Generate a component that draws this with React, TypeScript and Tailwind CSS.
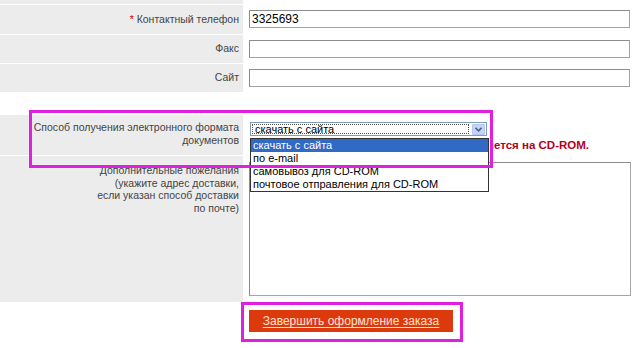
import React from 'react';

// ===== ORDER FORM (tail of the page) =====
const font = { fontFamily: '"Liberation Sans", Arial, sans-serif' };

const options = ['скачать с сайта', 'по e-mail', 'самовывоз для CD-ROM', 'почтовое отправления для CD-ROM'];

const TextRow: React.FC<{ label: React.ReactNode; value?: string; h: string }> = ({ label, value, h }) => (
  <>
    <div className={`bg-[#ececec] ${h} flex items-center justify-end pr-1 text-[10.5px] text-[#444]`}>{label}</div>
    <div className={`${h} pl-[6px] pt-[5px]`}>
      <div className="h-[18px] w-[381px] border border-[#a2a2a2] border-t-[#8c8c8c] border-l-[#8c8c8c] bg-white px-[2px] text-[12px] leading-[16px] text-black">
        {value}
      </div>
    </div>
  </>
);

const App: React.FC = () => {
  return (
    <div className="relative w-[640px] h-[348px] overflow-hidden bg-white" style={font}>
      <div className="grid grid-cols-[243px_397px] gap-y-px">
        <div className="bg-[#ececec] h-[4px]"></div>
        <div className="h-[4px]"></div>

        <TextRow
          h="h-[29px]"
          value="3325693"
          label={
            <span>
              <span className="text-[#d00000]">*</span> Контактный телефон
            </span>
          }
        />
        <TextRow h="h-[28px]" label="Факс" />
        <TextRow h="h-[28px]" label="Сайт" />
      </div>

      <div className="h-[23px]"></div>

      <div className="grid grid-cols-[243px_397px] gap-y-px">
        {/* delivery method */}
        <div className="bg-[#ececec] h-[40px] pt-[6px] pr-1 text-right text-[10.5px] leading-[13px] text-[#444]">
          Способ получения электронного формата
          <br />
          документов
        </div>
        <div className="h-[40px] pl-[7px] pt-[7px]">
          <div className="flex h-[14px] w-[237px] items-center border border-[#7f9db9] bg-white">
            <div className="ml-px h-[10px] w-[217px] border border-dotted border-[#555] text-[11px] leading-[8px] text-black pl-[2px]">
              скачать с сайта
            </div>
            <div className="ml-auto mr-px flex h-[11px] w-[13px] items-center justify-center rounded-[1px] bg-[#c4d5fb] border border-[#b3c6f0]">
              <svg width="7" height="5" viewBox="0 0 7 5">
                <path d="M0.5 0.8 L3.5 3.8 L6.5 0.8" fill="none" stroke="#4d6185" strokeWidth="1.6" />
              </svg>
            </div>
          </div>
          {/* note; its start is hidden under the open list */}
          <div className="mt-[3px] ml-[241px] flex w-[98px] justify-end overflow-hidden">
            <span className="whitespace-nowrap text-[11.5px] font-bold leading-[13px] text-[#b5001a]">
              Электронный формат документов поставляется на CD-ROM.
            </span>
          </div>
        </div>

        {/* wishes */}
        <div className="bg-[#ececec] h-[146px] pt-[8px] pr-1 text-right text-[10.5px] leading-[12.5px] text-[#444]">
          Дополнительные пожелания
          <br />
          (укажите адрес доставки,
          <br />
          если указан способ доставки
          <br />
          по почте)
        </div>
        <div className="h-[146px] pl-[6px] pt-[6px]">
          <div className="h-[134px] w-[382px] border border-[#a6a6a6] border-t-[#8c8c8c] border-l-[#8c8c8c] bg-white"></div>
        </div>
      </div>

      <div className="pl-[249px] pt-[6px]">
        <button className="h-[22px] w-[204px] bg-[#dc3a0c] text-[12px] text-[#ffe2d4] underline underline-offset-2">
          Завершить оформление заказа
        </button>
      </div>

      {/* open dropdown list */}
      <div className="absolute left-[250px] top-[138px] w-[239px] border border-[#333] bg-white text-[11px] leading-[13px] text-black">
        {options.map((o, i) => (
          <div key={i} className={`px-[2px] ${i === 0 ? 'bg-[#316ac5] text-white' : ''}`}>
            {o}
          </div>
        ))}
      </div>

      {/* annotation frames */}
      <div className="pointer-events-none absolute left-[29px] top-[110px] h-[58px] w-[464px] border-[3px] border-[#e020e0]"></div>
      <div className="pointer-events-none absolute left-[241px] top-[302px] h-[40px] w-[222px] border-[3px] border-[#e020e0]"></div>
    </div>
  );
};

export default App;
